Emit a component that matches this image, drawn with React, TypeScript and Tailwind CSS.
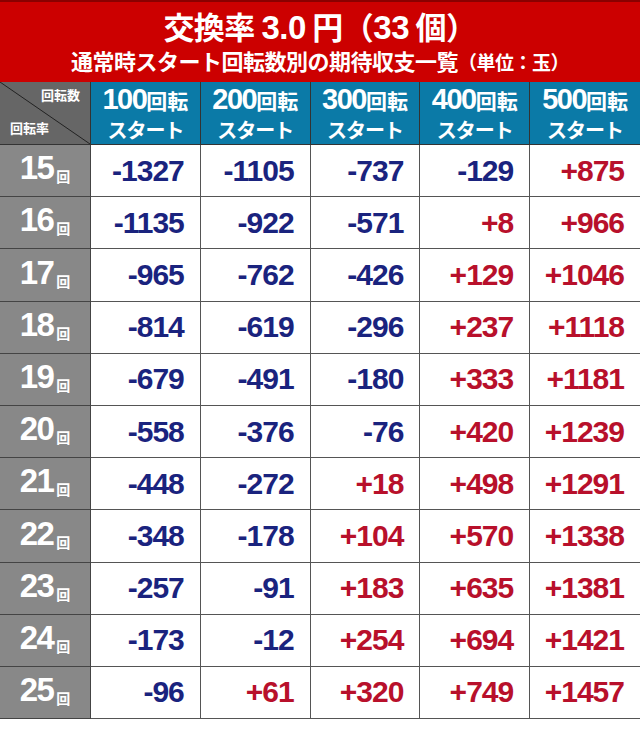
import React from "react";

const rows: { n: number; v: number[] }[] = [
  { n: 15, v: [-1327, -1105, -737, -129, 875] },
  { n: 16, v: [-1135, -922, -571, 8, 966] },
  { n: 17, v: [-965, -762, -426, 129, 1046] },
  { n: 18, v: [-814, -619, -296, 237, 1118] },
  { n: 19, v: [-679, -491, -180, 333, 1181] },
  { n: 20, v: [-558, -376, -76, 420, 1239] },
  { n: 21, v: [-448, -272, 18, 498, 1291] },
  { n: 22, v: [-348, -178, 104, 570, 1338] },
  { n: 23, v: [-257, -91, 183, 635, 1381] },
  { n: 24, v: [-173, -12, 254, 694, 1421] },
  { n: 25, v: [-96, 61, 320, 749, 1457] },
];

const heads = ["100", "200", "300", "400", "500"];

const FONT = { fontFamily: '"Liberation Sans", "Noto Sans CJK JP", sans-serif' };
const JP = { fontFamily: '"Noto Sans CJK JP", "Liberation Sans", sans-serif' };

export default function App() {
  return (
    <div className="w-[640px] h-[731px] bg-white overflow-hidden" style={FONT}>
      <div className="h-[82px] bg-[#cc0000] border-t-2 border-[#8a0000] flex flex-col items-center text-white font-bold">
        <div className="mt-[5px] text-[31px] leading-[37px] tracking-[-0.5px] whitespace-nowrap" style={JP}>
          交換率 <span className="text-[33px]" style={FONT}>3.0</span> 円（<span className="text-[33px]" style={FONT}>33</span> 個）
        </div>
        <div className="text-[22px] leading-[28px] tracking-[-0.5px] whitespace-nowrap" style={JP}>
          通常時スタート回転数別の期待収支一覧<span className="text-[19px]">（単位：玉）</span>
        </div>
      </div>
      <div className="grid grid-cols-[91px_repeat(5,1fr)]">
        <div className="relative h-[63px] bg-[#666666] border-r border-b border-[#333]">
          <svg className="absolute inset-0" width="90" height="62" viewBox="0 0 90 62">
            <line x1="0" y1="0" x2="90" y2="62" stroke="#222" strokeWidth="1" />
          </svg>
          <div className="absolute right-[10px] top-[6px] text-white text-[13px] font-bold leading-none" style={JP}>回転数</div>
          <div className="absolute left-[10px] bottom-[10px] text-white text-[13px] font-bold leading-none" style={JP}>回転率</div>
        </div>
        {heads.map((h, i) => (
          <div
            key={h}
            className={`h-[63px] bg-[#0b7aa7] border-b border-[#333] ${i < 4 ? "border-r" : ""} flex flex-col items-center justify-center text-white font-bold`}
          >
            <div className="leading-[28px] whitespace-nowrap">
              <span className="text-[29px] tracking-[-1.5px]">{h}</span>
              <span className="text-[21px]" style={JP}>回転</span>
            </div>
            <div className="text-[20px] leading-[24px] tracking-[-1px]" style={JP}>スタート</div>
          </div>
        ))}
        {rows.map((r) => (
          <React.Fragment key={r.n}>
            <div className="h-[52.2px] bg-[#888888] border-r border-b border-[#444] flex items-end justify-center pb-[12px] text-white font-bold">
              <span className="text-[33px] leading-none tracking-[-1.5px]">{r.n}</span>
              <span className="text-[14px] leading-none ml-[3px] mb-[1px]" style={JP}>回</span>
            </div>
            {r.v.map((v, i) => (
              <div
                key={i}
                className={`h-[52.2px] border-b border-[#555] ${i < 4 ? "border-r" : ""} flex items-center justify-end pr-[16px] font-bold text-[30px] leading-none tracking-[-1px] ${v < 0 ? "text-[#1a237e]" : "text-[#b8102b]"}`}
              >
                {v < 0 ? `-${-v}` : `+${v}`}
              </div>
            ))}
          </React.Fragment>
        ))}
      </div>
    </div>
  );
}
